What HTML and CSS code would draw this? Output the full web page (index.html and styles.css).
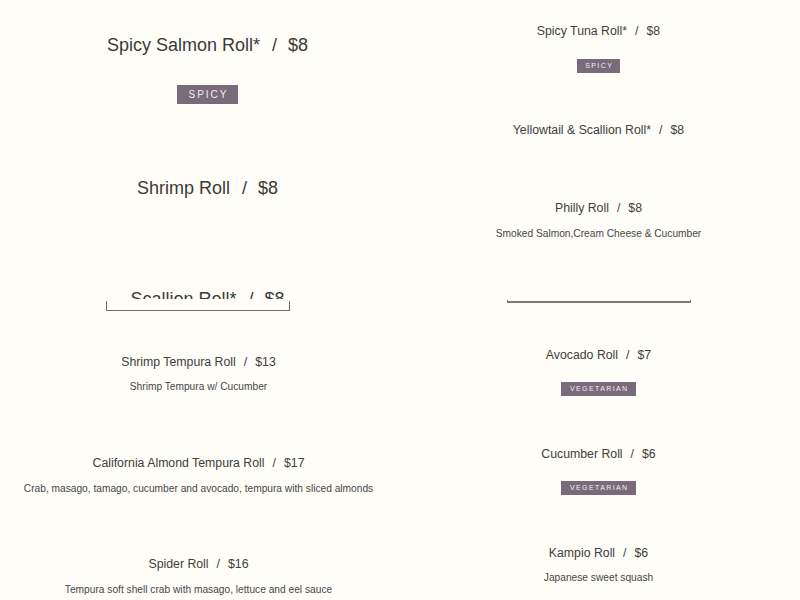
FILE: index.html
```html
<!DOCTYPE html>
<html lang="en">
<head>
<meta charset="utf-8">
<title>Sushi Rolls</title>
<link rel="stylesheet" href="styles.css">
</head>
<body>
<main class="menu">
  <section class="col">
    <div class="feature">
      <h2 class="title-lg m34">Spicy Salmon Roll*<span class="sep">/</span>$8</h2>
      <span class="badge badge-lg m29">SPICY</span>
      <h2 class="title-lg m73">Shrimp Roll<span class="sep">/</span>$8</h2>
      <div class="clip m89"><h2 class="title-lg">Scallion Roll*<span class="sep">/</span>$8</h2></div>
    </div>
    <div class="bracket bracket-tall"></div>
    <h3 class="title m43">Shrimp Tempura Roll<span class="sep-sm">/</span>$13</h3>
    <p class="desc m10">Shrimp Tempura w/ Cucumber</p>
    <h3 class="title m61">California Almond Tempura Roll<span class="sep-sm">/</span>$17</h3>
    <p class="desc m11">Crab, masago, tamago, cucumber and avocado, tempura with sliced almonds</p>
    <h3 class="title m60">Spider Roll<span class="sep-sm">/</span>$16</h3>
    <p class="desc m11">Tempura soft shell crab with masago, lettuce and eel sauce</p>
  </section>
  <section class="col">
    <h3 class="title m23">Spicy Tuna Roll*<span class="sep-sm">/</span>$8</h3>
    <span class="badge m20">SPICY</span>
    <h3 class="title m49">Yellowtail &amp; Scallion Roll*<span class="sep-sm">/</span>$8</h3>
    <h3 class="title m62">Philly Roll<span class="sep-sm">/</span>$8</h3>
    <p class="desc m11">Smoked Salmon,Cream Cheese &amp; Cucumber</p>
    <div class="bracket bracket-flat m59"></div>
    <h3 class="title m44">Avocado Roll<span class="sep-sm">/</span>$7</h3>
    <span class="badge m19">VEGETARIAN</span>
    <h3 class="title m50">Cucumber Roll<span class="sep-sm">/</span>$6</h3>
    <span class="badge m19">VEGETARIAN</span>
    <h3 class="title m50">Kampio Roll<span class="sep-sm">/</span>$6</h3>
    <p class="desc m10">Japanese sweet squash</p>
  </section>
</main>
</body>
</html>
```

FILE: styles.css
```css
html, body {
  margin: 0;
  padding: 0;
  background: #fefdf7;
}
body {
  font-family: "Liberation Sans", Arial, sans-serif;
  color: #3a3a3a;
  width: 800px;
  height: 600px;
  overflow: hidden;
}
.menu {
  display: grid;
  grid-template-columns: 397px 397px;
  column-gap: 3px;
}
.col {
  display: flex;
  flex-direction: column;
  align-items: center;
}
.feature {
  display: flex;
  flex-direction: column;
  align-items: center;
  padding-left: 18px;
}
h2, h3, p { margin: 0; font-weight: normal; white-space: nowrap; }

.title-lg {
  font-size: 18px;
  line-height: 22px;
  color: #3a3a3a;
}
.title {
  font-size: 12.3px;
  line-height: 16px;
  color: #404040;
}
.desc {
  font-size: 10.2px;
  line-height: 14px;
  color: #474747;
}
.sep { margin: 0 11px 0 12px; }
.sep-sm { margin: 0 8px 0 8px; }

.badge {
  display: block;
  background: #7a6b7b;
  color: #f3eff2;
  font-size: 7px;
  height: 14px;
  line-height: 14px;
  letter-spacing: 1.4px;
  padding: 0 7px 0 8.5px;
}
.badge-lg {
  font-size: 10px;
  height: 19px;
  line-height: 19px;
  letter-spacing: 2px;
  padding: 0 9px 0 11px;
}

.clip {
  height: 11px;
  overflow: hidden;
}

.bracket {
  box-sizing: border-box;
  width: 184px;
  border: 1px solid #6b6b6b;
  border-top: none;
}
.bracket-tall { height: 10px; margin-top: 2px; margin-right: 2px; }
.bracket-flat { height: 3px; border-color: #7a7a7a; border-bottom-width: 2px; }

.m9 { margin-top: 9px; }
.m10 { margin-top: 10px; }
.m11 { margin-top: 11px; }
.m19 { margin-top: 19px; }
.m20 { margin-top: 20px; }
.m23 { margin-top: 23px; }
.m29 { margin-top: 29px; }
.m34 { margin-top: 34px; }
.m43 { margin-top: 43px; }
.m44 { margin-top: 44px; }
.m49 { margin-top: 49px; }
.m50 { margin-top: 50px; }
.m59 { margin-top: 59px; }
.m60 { margin-top: 60px; }
.m61 { margin-top: 61px; }
.m62 { margin-top: 62px; }
.m73 { margin-top: 73px; }
.m89 { margin-top: 89px; }
```
